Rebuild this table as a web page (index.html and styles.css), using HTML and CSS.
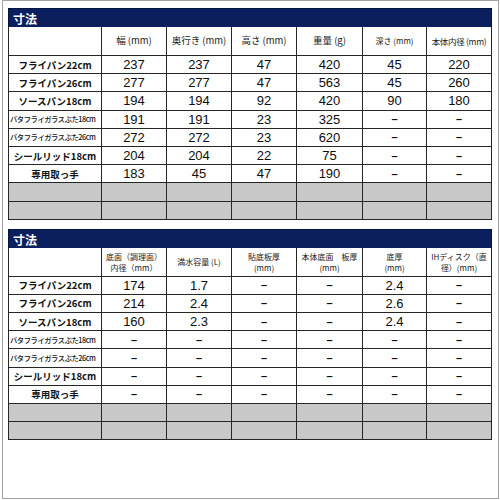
FILE: index.html
```html
<!DOCTYPE html>
<html lang="ja">
<head>
<meta charset="utf-8">
<link rel="stylesheet" href="styles.css">
</head>
<body>
<div class="frame">
  <section class="spec">
    <div class="bar">寸法</div>
    <div class="grid">
      <div class="c h"></div>
      <div class="c h">幅 (mm)</div>
      <div class="c h">奥行き (mm)</div>
      <div class="c h">高さ (mm)</div>
      <div class="c h">重量 (g)</div>
      <div class="c h sm">深さ (mm)</div>
      <div class="c h sm2">本体内径 (mm)</div>

      <div class="c l">フライパン22cm</div><div class="c n">237</div><div class="c n">237</div><div class="c n">47</div><div class="c n">420</div><div class="c n">45</div><div class="c n">220</div>
      <div class="c l">フライパン26cm</div><div class="c n">277</div><div class="c n">277</div><div class="c n">47</div><div class="c n">563</div><div class="c n">45</div><div class="c n">260</div>
      <div class="c l">ソースパン18cm</div><div class="c n">194</div><div class="c n">194</div><div class="c n">92</div><div class="c n">420</div><div class="c n">90</div><div class="c n">180</div>
      <div class="c l tiny">バタフライガラスぶた18cm</div><div class="c n">191</div><div class="c n">191</div><div class="c n">23</div><div class="c n">325</div><div class="c n d">–</div><div class="c n d">–</div>
      <div class="c l tiny">バタフライガラスぶた26cm</div><div class="c n">272</div><div class="c n">272</div><div class="c n">23</div><div class="c n">620</div><div class="c n d">–</div><div class="c n d">–</div>
      <div class="c l">シールリッド18cm</div><div class="c n">204</div><div class="c n">204</div><div class="c n">22</div><div class="c n">75</div><div class="c n d">–</div><div class="c n d">–</div>
      <div class="c l">専用取っ手</div><div class="c n">183</div><div class="c n">45</div><div class="c n">47</div><div class="c n">190</div><div class="c n d">–</div><div class="c n d">–</div>
      <div class="c g"></div><div class="c g"></div><div class="c g"></div><div class="c g"></div><div class="c g"></div><div class="c g"></div><div class="c g"></div>
      <div class="c g"></div><div class="c g"></div><div class="c g"></div><div class="c g"></div><div class="c g"></div><div class="c g"></div><div class="c g"></div>
    </div>
  </section>

  <section class="spec">
    <div class="bar">寸法</div>
    <div class="grid">
      <div class="c h"></div>
      <div class="c h two"><span>底面（調理面）</span><span>内径（mm）</span></div>
      <div class="c h two"><span>満水容量 (L)</span></div>
      <div class="c h two"><span>貼底板厚</span><span>(mm)</span></div>
      <div class="c h two"><span>本体底面　板厚</span><span>(mm)</span></div>
      <div class="c h two"><span>底厚</span><span>(mm)</span></div>
      <div class="c h two"><span>IHディスク（直</span><span>径）(mm)</span></div>

      <div class="c l">フライパン22cm</div><div class="c n">174</div><div class="c n">1.7</div><div class="c n d">–</div><div class="c n d">–</div><div class="c n">2.4</div><div class="c n d">–</div>
      <div class="c l">フライパン26cm</div><div class="c n">214</div><div class="c n">2.4</div><div class="c n d">–</div><div class="c n d">–</div><div class="c n">2.6</div><div class="c n d">–</div>
      <div class="c l">ソースパン18cm</div><div class="c n">160</div><div class="c n">2.3</div><div class="c n d">–</div><div class="c n d">–</div><div class="c n">2.4</div><div class="c n d">–</div>
      <div class="c l tiny">バタフライガラスぶた18cm</div><div class="c n d">–</div><div class="c n d">–</div><div class="c n d">–</div><div class="c n d">–</div><div class="c n d">–</div><div class="c n d">–</div>
      <div class="c l tiny">バタフライガラスぶた26cm</div><div class="c n d">–</div><div class="c n d">–</div><div class="c n d">–</div><div class="c n d">–</div><div class="c n d">–</div><div class="c n d">–</div>
      <div class="c l">シールリッド18cm</div><div class="c n d">–</div><div class="c n d">–</div><div class="c n d">–</div><div class="c n d">–</div><div class="c n d">–</div><div class="c n d">–</div>
      <div class="c l">専用取っ手</div><div class="c n d">–</div><div class="c n d">–</div><div class="c n d">–</div><div class="c n d">–</div><div class="c n d">–</div><div class="c n d">–</div>
      <div class="c g"></div><div class="c g"></div><div class="c g"></div><div class="c g"></div><div class="c g"></div><div class="c g"></div><div class="c g"></div>
      <div class="c g"></div><div class="c g"></div><div class="c g"></div><div class="c g"></div><div class="c g"></div><div class="c g"></div><div class="c g"></div>
    </div>
  </section>
</div>
</body>
</html>
```

FILE: styles.css
```css
html, body {
  margin: 0;
  padding: 0;
  background: #ffffff;
}
body {
  font-family: "Noto Sans CJK JP", "Noto Sans", sans-serif;
  color: #111;
}
.frame {
  box-sizing: border-box;
  margin-left: 2px;
  width: 497px;
  height: 499px;
  border: 1px solid #a2a2a2;
  padding: 7px 0 0 5px;
  display: flex;
  flex-direction: column;
  gap: 9px;
}
.spec {
  width: 484px;
  display: flex;
  flex-direction: column;
}
.bar {
  height: 19px;
  background: #0b1f5e;
  color: #fff;
  font-size: 12px;
  font-weight: 700;
  line-height: 19px;
  padding-left: 4px;
  border: 1px solid #061440;
  border-bottom: none;
  box-sizing: border-box;
}
.grid {
  display: grid;
  grid-template-columns: 92px 64px 64px 64px 65px 63px 64px;
  grid-template-rows: 28px repeat(9, 17.2px);
  gap: 1px;
  padding: 1px;
  padding-top: 0;
  background: #262626;
}
.c {
  background: #fff;
  display: flex;
  align-items: center;
  justify-content: center;
  text-align: center;
  white-space: nowrap;
  overflow: hidden;
}
.h {
  font-size: 9.5px;
  font-weight: 400;
  line-height: 1.2;
  color: #1a1a1a;
}
.h.sm { font-size: 8px; }
.h.sm2 { font-size: 8.5px; letter-spacing: -0.3px; }
.h.two {
  flex-direction: column;
  font-size: 8px;
  line-height: 11px;
  letter-spacing: 0;
}
.l {
  font-size: 9.5px;
  font-weight: 700;
  letter-spacing: 0;
}
.l.tiny {
  font-size: 7.3px;
  font-weight: 500;
  letter-spacing: -0.45px;
  justify-content: flex-start;
  padding-left: 1px;
}
.n {
  font-family: "Liberation Sans", Arial, sans-serif;
  font-size: 13px;
  font-weight: 400;
  color: #0d0d0d;
}
.n.d {
  font-weight: 700;
  font-size: 11px;
}
.g {
  background: #c8c8c8;
}
```
